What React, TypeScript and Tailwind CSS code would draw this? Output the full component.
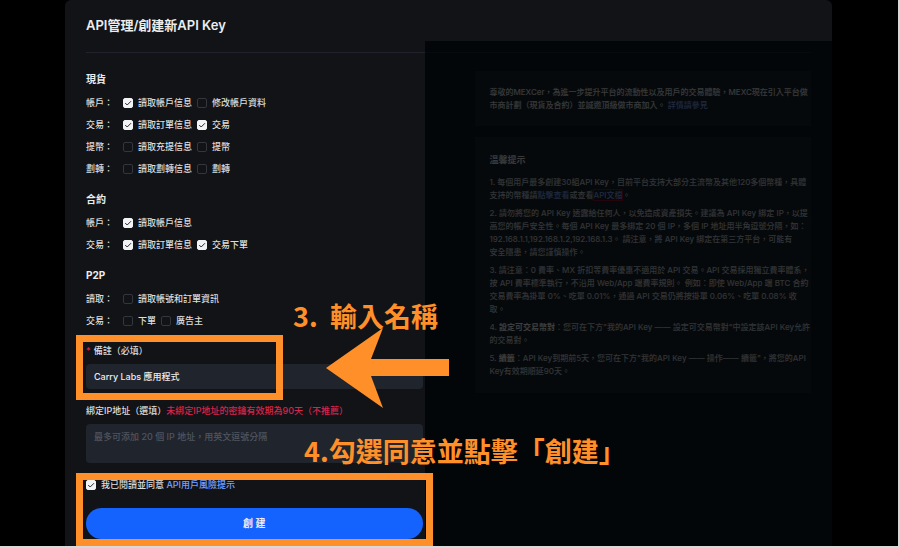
import React from "react";

type Permission = { name: string; checked?: boolean };
type Row = { label: string; items: Permission[] };
type Group = { title: string; rows: Row[] };

const groups: Group[] = [
  {
    title: "現貨",
    rows: [
      { label: "帳戶：", items: [{ name: "讀取帳戶信息", checked: true }, { name: "修改帳戶資料" }] },
      { label: "交易：", items: [{ name: "讀取訂單信息", checked: true }, { name: "交易", checked: true }] },
      { label: "提幣：", items: [{ name: "讀取充提信息" }, { name: "提幣" }] },
      { label: "劃轉：", items: [{ name: "讀取劃轉信息" }, { name: "劃轉" }] },
    ],
  },
  {
    title: "合約",
    rows: [
      { label: "帳戶：", items: [{ name: "讀取帳戶信息", checked: true }] },
      { label: "交易：", items: [{ name: "讀取訂單信息", checked: true }, { name: "交易下單", checked: true }] },
    ],
  },
  {
    title: "P2P",
    rows: [
      { label: "讀取：", items: [{ name: "讀取帳號和訂單資訊" }] },
      { label: "交易：", items: [{ name: "下單" }, { name: "廣告主" }] },
    ],
  },
];

function Checkbox({ id, checked }: { id: string; checked?: boolean }) {
  return (
    <span className="grid size-[10px] shrink-0">
      <input
        id={id}
        type="checkbox"
        defaultChecked={checked}
        className="peer col-start-1 row-start-1 size-[10px] appearance-none rounded-[2px] border border-[#33363c] checked:border-[#f2f3f4] checked:bg-[#f2f3f4]"
      />
      <svg
        viewBox="0 0 10 10"
        className="pointer-events-none invisible col-start-1 row-start-1 size-[10px] peer-checked:visible"
        fill="none"
        stroke="#26282c"
        strokeWidth="1"
      >
        <path d="M2.2 5 L4.2 7 L8 3.2" />
      </svg>
    </span>
  );
}

function PermissionGroup({ group }: { group: Group }) {
  return (
    <section className="mb-[11px]">
      <h2 className="mb-[5px] text-[10px] leading-4 font-bold text-[#eceded]">{group.title}</h2>
      {group.rows.map((row) => (
        <div key={row.label} className="flex h-[22px] items-center text-[9px]">
          <span className="w-[37px] shrink-0">{row.label}</span>
          <div className="flex gap-[5px]">
            {row.items.map((item) => {
              const id = `${group.title}-${row.label}-${item.name}`;
              return (
                <label key={id} htmlFor={id} className="flex items-center gap-[5px] whitespace-nowrap">
                  <Checkbox id={id} checked={item.checked} />
                  {item.name}
                </label>
              );
            })}
          </div>
        </div>
      ))}
    </section>
  );
}

function Notices() {
  return (
    <aside className="flex flex-col gap-[11px] text-[8px] leading-[13px] whitespace-nowrap text-[#d4d6da]">
      <div className="bg-[#1c1e23] pt-[15px] pb-[14px] pl-[15px] text-[#eceded]">
        <p>
          尊敬的MEXCer，為進一步提升平台的流動性以及用戶的交易體驗，MEXC現在引入平台做
          <br />
          市商計劃（現貨及合約）並誠邀頂級做市商加入。{" "}
          <a href="#market-maker" className="text-[#86aaff]">詳情請參見</a>
        </p>
      </div>
      <div className="flex flex-col gap-[5px] bg-[#1c1e23] pt-[15px] pb-[15px] pl-[15px]">
        <h2 className="mb-[3px] text-[9px] leading-4 font-bold text-[#eceded]">溫馨提示</h2>
        <p>
          1. 每個用戶最多創建30組API Key，目前平台支持大部分主流幣及其他120多個幣種，具體
          <br />
          支持的幣種請<a href="#coins" className="text-[#86aaff]">點擊查看</a>或查看
          <a href="#docs" className="text-[#86aaff] outline outline-[#a01024]">API文檔</a>。
        </p>
        <p>
          2. 請勿將您的 API Key 透露給任何人，以免造成資產損失。建議為 API Key 綁定 IP，以提
          <br />
          高您的帳戶安全性。每個 API Key 最多綁定 20 個 IP，多個 IP 地址用半角逗號分隔，如：
          <br />
          192.168.1.1,192.168.1.2,192.168.1.3。 請注意，將 API Key 綁定在第三方平台，可能有
          <br />
          安全隱患，請您謹慎操作。
        </p>
        <p>
          3. 請注意：0 費率、MX 折扣等費率優惠不適用於 API 交易。API 交易採用獨立費率體系，
          <br />
          按 API 費率標準執行，不沿用 Web/App 端費率規則。 例如：即使 Web/App 端 BTC 合約
          <br />
          交易費率為掛單 0%、吃單 0.01%，通過 API 交易仍將按掛單 0.06%、吃單 0.08% 收
          <br />
          取。
        </p>
        <p>
          4. <strong className="text-white">設定可交易幣對</strong>：您可在下方"我的API Key —— 設定可交易幣對"中設定該API Key允許
          <br />
          的交易對。
        </p>
        <p>
          5. <strong className="text-white">續籤</strong>：API Key到期前5天，您可在下方"我的API Key —— 操作—— 續籤"，將您的API
          <br />
          Key有效期順延90天。
        </p>
      </div>
    </aside>
  );
}

export default function App() {
  return (
    <div className="flex min-h-screen bg-[#d9d9d9] pr-[2px] pb-[2px] font-['Inter','Noto_Sans_CJK_TC',sans-serif] font-medium text-[#dcddde]">
      <div className="flex flex-1 bg-black pr-[66px] pl-[65px]">
        <main className="relative flex-1 rounded-t-md bg-[#111317] px-[21px]">
          <header className="flex h-[52px] items-center">
            <h1 className="text-[13px] font-semibold text-[#eceded]">API管理/創建新API Key</h1>
          </header>
          <div className="grid grid-cols-2 gap-[52px] border-t border-[#20232c] pt-[18px]">
            <form onSubmit={(e) => e.preventDefault()} className="text-[9px]">
              {groups.map((group) => (
                <PermissionGroup key={group.title} group={group} />
              ))}

              <label htmlFor="note" className="block leading-4">
                <span className="mr-[3px] text-[#e0244d]">*</span>備註（必填）
              </label>
              <input
                id="note"
                type="text"
                defaultValue="Carry Labs 應用程式"
                className="mt-[5px] block h-[25px] w-full rounded-[4px] bg-[#20242d] px-2 text-[9px] text-[#eceded]"
              />

              <label htmlFor="ip" className="mt-[14px] block leading-4">
                綁定IP地址（選填）<span className="text-[#d9234c]">未綁定IP地址的密鑰有效期為90天（不推薦）</span>
              </label>
              <textarea
                id="ip"
                placeholder="最多可添加 20 個 IP 地址，用英文逗號分隔"
                className="mt-[5px] block h-[39px] w-full resize-none rounded-[4px] bg-[#20242d] px-2 py-[5px] text-[9px] leading-4 placeholder:text-[#50555f]"
              />

              <div className="relative mt-[14px] mb-[7px]">
                <div className="flex h-4 items-center gap-[5px]">
                  <Checkbox id="agree" checked />
                  <label htmlFor="agree">
                    我已閱讀並同意 <a href="#risk" className="text-[#7aa2ff]">API用戶風險提示</a>
                  </label>
                </div>
                <button type="submit" className="mt-[15px] h-[31px] w-full rounded-full bg-[#1463ff] text-[10px] font-bold text-[#eceded]">
                  創 建
                </button>
                <div className="pointer-events-none absolute -inset-x-[10px] -top-1 -bottom-[7px] z-20 border-[7px] border-[#ff9029]" />
              </div>
            </form>
            <Notices />
          </div>

          {/* Shade over everything but the form */}
          <div className="pointer-events-none absolute top-[41px] right-0 bottom-0 left-[calc(50%-24px)] z-10 bg-[#000204]/77" />

          {/* Tutorial callouts */}
          <div className="pointer-events-none absolute top-[335px] left-[11px] z-20 h-[65px] w-[207px] border-[7px] border-[#ff9029]" />
          <svg viewBox="0 0 123 80" className="pointer-events-none absolute top-[328px] left-[261px] z-20 h-[80px] w-[123px]" fill="#ff9029">
            <path d="M0 40 L57 0 L45 31 H123 V48 H45 L57 80 Z" />
          </svg>
          <p className="pointer-events-none absolute top-[296px] left-[228px] z-20 font-['Noto_Sans_CJK_TC',sans-serif] text-[27px] leading-10 font-bold whitespace-pre text-[#ff9029]">
            {"3.  輸入名稱"}
          </p>
          <p className="pointer-events-none absolute top-[431px] left-[239px] z-20 font-['Noto_Sans_CJK_TC',sans-serif] text-[27px] leading-10 font-bold whitespace-pre text-[#ff9029]">
            4.勾選同意並點擊「創建」
          </p>
        </main>
      </div>
    </div>
  );
}
